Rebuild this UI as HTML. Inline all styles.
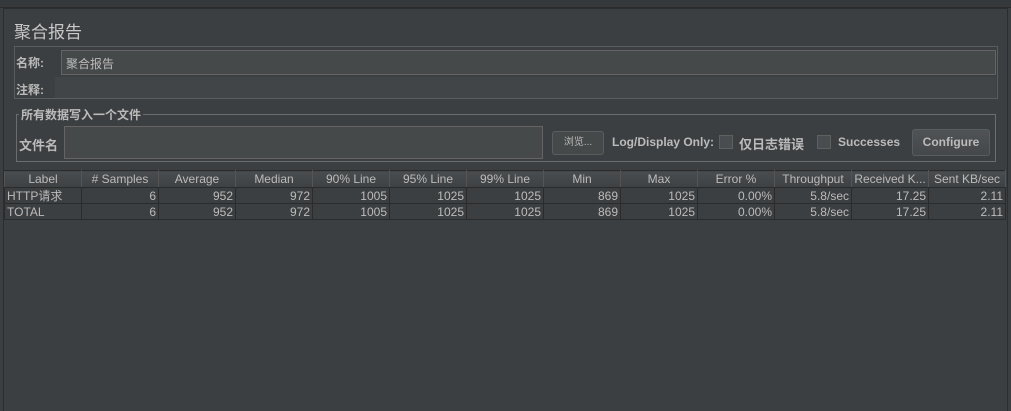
<!DOCTYPE html>
<html><head><meta charset="utf-8"><style>
*{margin:0;padding:0;box-sizing:border-box}
body{width:1011px;height:411px;background:#3c3f41;font-family:"Liberation Sans","Noto Sans CJK SC",sans-serif;color:#bbbbbb;position:relative;overflow:hidden;font-size:12px}
.abs{position:absolute}
.top{left:0;top:0;width:1011px;height:8px;background:#36393b;border-bottom:1px solid #2b2b2b}
.frame{left:3px;top:8px;width:1005px;height:403px;border-left:1px solid #2b2d2e;border-top:1px solid #2b2d2e;border-right:1px solid #2b2d2e;background:#3c3f41}
.input{background:#45494a;border:1px solid #646464}
.cb{width:14px;height:14px;background:#4a4d4f;border:1px solid #5e6060}
table{border-collapse:collapse;position:absolute;left:4px;top:170px;table-layout:fixed}
td,th{width:77px;font-size:12px;padding:0 2px;border:1px solid #2b2b2b;color:#bbbbbb;white-space:nowrap;overflow:hidden;line-height:14px}
th{font-weight:normal;background:linear-gradient(#4a4d4f,#3e4143);height:17px;text-align:center;border-color:#2b2b2b #555 #2b2b2b #555}
td{text-align:right;background:#3c3f41;height:16px}
td:first-child{text-align:left}
</style></head><body>
<div class="abs top"></div>
<div class="abs frame"></div>
<div class="abs" style="left:14px;top:18px;font-size:17px;color:#c8c8c8">聚合报告</div>
<div class="abs" style="left:14px;top:46px;width:984px;height:53px;border:1px solid #5a5d5f"></div>
<div class="abs" style="left:16px;top:54px;font-weight:bold;font-size:12px">名称:</div>
<div class="abs input" style="left:61px;top:50px;width:935px;height:25px"></div>
<div class="abs" style="left:66px;top:55px;font-size:12px">聚合报告</div>
<div class="abs" style="left:16px;top:81px;font-weight:bold;font-size:12px">注释:</div>
<div class="abs" style="left:55px;top:77px;width:941px;height:21px;background:#414547"></div>
<div class="abs" style="left:16px;top:114px;width:980px;height:48px;border:1px solid #6a6d6f"></div>
<div class="abs" style="left:19px;top:106px;background:#3c3f41;padding:0 2px;font-weight:bold;font-size:12px">所有数据写入一个文件</div>
<div class="abs" style="left:19px;top:135px;font-weight:bold;font-size:13px">文件名</div>
<div class="abs input" style="left:64px;top:126px;width:479px;height:33px;background:#45494a"></div>
<div class="abs" style="left:552px;top:131px;width:52px;height:24px;border:1px solid #5a5d5f;border-radius:3px;background:#45494a;font-size:10px;text-align:center;line-height:22px">浏览...</div>
<div class="abs" style="left:612px;top:135px;font-weight:bold;font-size:12px">Log/Display Only:</div>
<div class="abs cb" style="left:719px;top:135px"></div>
<div class="abs" style="left:739px;top:134px;font-weight:bold;font-size:13px">仅日志错误</div>
<div class="abs cb" style="left:817px;top:135px"></div>
<div class="abs" style="left:838px;top:135px;font-weight:bold;font-size:12px">Successes</div>
<div class="abs" style="left:912px;top:129px;width:78px;height:27px;border:1px solid #5a5d5f;border-radius:3px;background:linear-gradient(#505355,#45484a);font-weight:bold;text-align:center;line-height:25px">Configure</div>
<table>
<tr><th>Label</th><th># Samples</th><th>Average</th><th>Median</th><th>90% Line</th><th>95% Line</th><th>99% Line</th><th>Min</th><th>Max</th><th>Error %</th><th>Throughput</th><th>Received K...</th><th>Sent KB/sec</th></tr>
<tr><td>HTTP请求</td><td>6</td><td>952</td><td>972</td><td>1005</td><td>1025</td><td>1025</td><td>869</td><td>1025</td><td>0.00%</td><td>5.8/sec</td><td>17.25</td><td>2.11</td></tr>
<tr><td>TOTAL</td><td>6</td><td>952</td><td>972</td><td>1005</td><td>1025</td><td>1025</td><td>869</td><td>1025</td><td>0.00%</td><td>5.8/sec</td><td>17.25</td><td>2.11</td></tr>
</table>
</body></html>
